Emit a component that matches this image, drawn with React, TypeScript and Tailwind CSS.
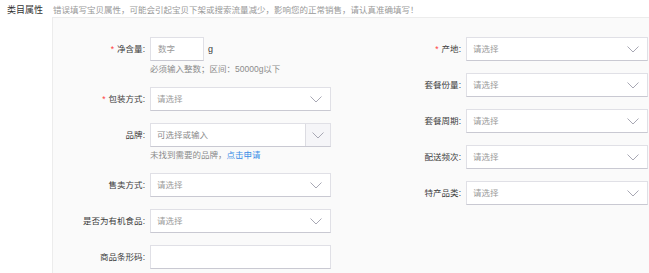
import React from 'react';

const font = { fontFamily: '"Liberation Sans", "Noto Sans CJK SC", sans-serif' };

function Chevron() {
    return (
        <svg width="12" height="7" viewBox="0 0 12 7" className="shrink-0">
            <polyline points="0.5,0.5 6,6 11.5,0.5" fill="none" stroke="#a8a8b4" strokeWidth="1" />
        </svg>
    );
}

function Label({ text, required }: { text: string; required?: boolean }) {
    return (
        <div className="flex h-6 w-[97px] shrink-0 items-center justify-end pr-[5px] text-[8.5px] leading-none text-[#3c3c3c]">
            {required && <span className="mr-[3px] text-[#ff4040]">*</span>}
            <span>{text}:</span>
        </div>
    );
}

function Select({ wide }: { wide?: boolean }) {
    return (
        <div
            className={`flex h-6 items-center justify-between border border-[#e0e0e6] border-b-[#c9c9d2] bg-white pl-[6px] pr-[8px] ${
                wide ? 'w-[182px]' : 'w-[181px]'
            }`}
        >
            <span className="text-[8.5px] leading-none text-[#9a9a9a]">请选择</span>
            <Chevron />
        </div>
    );
}

function Row({ label, required, children }: { label: string; required?: boolean; children: React.ReactNode }) {
    return (
        <div className="flex items-start">
            <Label text={label} required={required} />
            <div className="flex flex-col">{children}</div>
        </div>
    );
}

function Help({ children }: { children: React.ReactNode }) {
    return <div className="mt-[3px] h-[11px] text-[8.5px] leading-[11px] text-[#8c8c8c]">{children}</div>;
}

export default function App() {
    return (
        <div className="h-[273px] w-[649px] overflow-hidden bg-white" style={font}>
            {/* header */}
            <div className="flex h-[17px] items-start pt-[5px] text-[8.5px] leading-[10px]">
                <div className="w-[53px] shrink-0 pl-[7px] text-[9px] text-[#333]">类目属性</div>
                <div className="text-[#999]">错误填写宝贝属性，可能会引起宝贝下架或搜索流量减少，影响您的正常销售，请认真准确填写！</div>
            </div>

            {/* panel */}
            <div className="ml-[52px] flex h-[256px] gap-[38px] border-l border-t border-[#ececec] bg-[#fafafa] pt-[19px]">
                {/* left column */}
                <div className="flex flex-col gap-3">
                    <Row label="净含量" required>
                        <div className="flex items-center">
                            <div className="flex h-6 w-[54px] items-center border border-[#e0e0e6] border-b-[#c9c9d2] bg-white pl-[7px] text-[8.5px] leading-none text-[#9a9a9a]">
                                数字
                            </div>
                            <span className="ml-[4px] text-[9px] leading-none text-[#3c3c3c]">g</span>
                        </div>
                        <Help>必须输入整数；区间：50000g以下</Help>
                    </Row>
                    <Row label="包装方式" required>
                        <Select />
                    </Row>
                    <Row label="品牌">
                        <div className="flex h-6 w-[181px] border border-[#e0e0e6] border-b-[#c9c9d2] bg-white">
                            <div className="flex flex-1 items-center pl-[6px] text-[8.5px] leading-none text-[#8a8a8a]">可选择或输入</div>
                            <div className="flex w-[25px] items-center justify-center border-l border-[#dcdce2] bg-[#f5f5f8]">
                                <Chevron />
                            </div>
                        </div>
                        <Help>
                            未找到需要的品牌，<span className="text-[#3a8ee6]">点击申请</span>
                        </Help>
                    </Row>
                    <Row label="售卖方式">
                        <Select />
                    </Row>
                    <Row label="是否为有机食品">
                        <Select />
                    </Row>
                    <Row label="商品条形码">
                        <div className="h-6 w-[181px] border border-[#e0e0e6] border-b-[#c9c9d2] bg-white" />
                    </Row>
                </div>

                {/* right column */}
                <div className="flex flex-col gap-3">
                    <Row label="产地" required>
                        <Select wide />
                    </Row>
                    <Row label="套餐份量">
                        <Select wide />
                    </Row>
                    <Row label="套餐周期">
                        <Select wide />
                    </Row>
                    <Row label="配送频次">
                        <Select wide />
                    </Row>
                    <Row label="特产品类">
                        <Select wide />
                    </Row>
                </div>
            </div>
        </div>
    );
}
